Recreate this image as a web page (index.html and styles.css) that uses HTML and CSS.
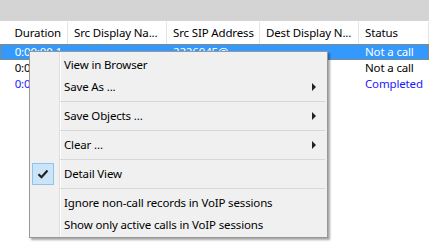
FILE: index.html
```html
<!DOCTYPE html>
<html>
<head>
<meta charset="utf-8">
<link rel="stylesheet" href="styles.css">
</head>
<body>
<div class="topbar"></div>
<div class="grid">
  <div class="row header">
    <div class="c right">Duration</div>
    <div class="c">Src Display Na...</div>
    <div class="c">Src SIP Address</div>
    <div class="c">Dest Display N...</div>
    <div class="c">Status</div>
  </div>
  <div class="row sel">
    <div class="c right">0:00:00.1</div>
    <div class="c"></div>
    <div class="c">2226945@...</div>
    <div class="c"></div>
    <div class="c">Not a call</div>
  </div>
  <div class="row">
    <div class="c right">0:00:00.0</div>
    <div class="c"></div>
    <div class="c"></div>
    <div class="c"></div>
    <div class="c">Not a call</div>
  </div>
  <div class="row blue">
    <div class="c right">0:00:05.2</div>
    <div class="c"></div>
    <div class="c"></div>
    <div class="c"></div>
    <div class="c">Completed</div>
  </div>
</div>

<div class="menu">
  <div class="item">View in Browser</div>
  <div class="item sub">Save As ...</div>
  <div class="sep"></div>
  <div class="item sub">Save Objects ...</div>
  <div class="sep"></div>
  <div class="item sub">Clear ...</div>
  <div class="sep"></div>
  <div class="item checked">
    <span class="check"><svg width="12" height="10" viewBox="0 0 12 10"><path d="M1.5 5.2 L4.5 8.2 L10.5 1.5" fill="none" stroke="#222" stroke-width="2.2"/></svg></span>
    Detail View
  </div>
  <div class="sep"></div>
  <div class="item">Ignore non-call records in VoIP sessions</div>
  <div class="item">Show only active calls in VoIP sessions</div>
</div>
</body>
</html>
```

FILE: styles.css
```css
html, body {
  margin: 0;
  padding: 0;
  background: #ffffff;
  width: 429px;
  height: 251px;
  overflow: hidden;
  font-family: "Noto Sans", "Liberation Sans", sans-serif;
  font-size: 11.5px;
  letter-spacing: -0.15px;
  color: #000;
}

.topbar {
  height: 21px;
  background: #d4d4d4;
  border-bottom: 1px solid #ffffff;
}

.grid {
  display: flex;
  flex-direction: column;
}

.row {
  display: grid;
  grid-template-columns: 68px 99px 93px 99px 1fr;
  height: 16px;
  line-height: 16px;
  white-space: nowrap;
}

.row .c {
  padding: 0 6px 0 6px;
  overflow: hidden;
}

.row .c.right {
  text-align: right;
}

.header {
  height: 22px;
  line-height: 22px;
}

.header .c {
  border-right: 1px solid #e5e5e5;
  padding-left: 6px;
}

.header .c:last-child {
  width: 57px;
}

.sel {
  background: #3399ff;
  color: #ffffff;
  outline: 1px dotted #d08000;
  outline-offset: -1px;
}

.blue {
  color: #1a1aff;
}

.menu {
  position: absolute;
  left: 29px;
  top: 51px;
  width: 297px;
  border: 1px solid #979797;
  padding: 2px 0 1px 0;
  background: linear-gradient(to right, transparent 29px, #dedede 29px, #dedede 30px, #ffffff 30px, #ffffff 31px, transparent 31px), #f0f0f0;
  box-shadow: 2px 2px 2px rgba(0, 0, 0, 0.35);
}

.item {
  position: relative;
  height: 22px;
  line-height: 22px;
  padding-left: 34px;
  white-space: nowrap;
}

.item.sub::after {
  content: "";
  position: absolute;
  right: 11px;
  top: 7px;
  border-left: 4px solid #222;
  border-top: 4px solid transparent;
  border-bottom: 4px solid transparent;
}

.sep {
  height: 1px;
  background: #d7d7d7;
  margin: 3px 2px 3px 30px;
}

.check {
  position: absolute;
  left: 2px;
  top: 0;
  width: 20px;
  height: 20px;
  border: 1px solid #8cc3ef;
  background: #cce4f7;
  display: flex;
  align-items: center;
  justify-content: center;
}
```
